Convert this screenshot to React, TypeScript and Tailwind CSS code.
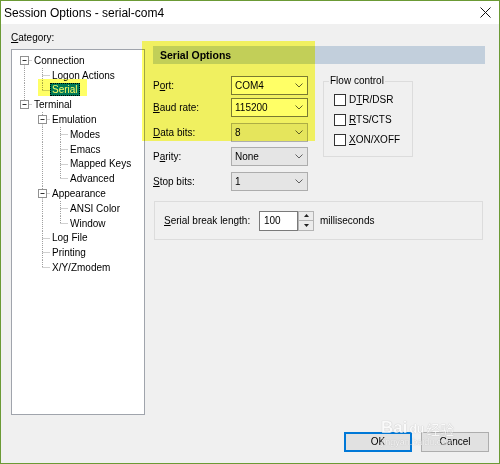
import { type FC, type ReactNode } from "react";

type TreeNode = {
  label: string;
  level: number;
  box?: boolean;
  guides: boolean[];
  above?: boolean;
  next?: boolean;
  selected?: boolean;
};

const NODES: TreeNode[] = [
  { label: "Connection", level: 0, box: true, guides: [], next: true },
  { label: "Logon Actions", level: 1, guides: [true], next: true },
  { label: "Serial", level: 1, guides: [true], selected: true },
  { label: "Terminal", level: 0, box: true, guides: [], above: true },
  { label: "Emulation", level: 1, box: true, guides: [false], above: true, next: true },
  { label: "Modes", level: 2, guides: [false, true], next: true },
  { label: "Emacs", level: 2, guides: [false, true], next: true },
  { label: "Mapped Keys", level: 2, guides: [false, true], next: true },
  { label: "Advanced", level: 2, guides: [false, true] },
  { label: "Appearance", level: 1, box: true, guides: [false], above: true, next: true },
  { label: "ANSI Color", level: 2, guides: [false, true], next: true },
  { label: "Window", level: 2, guides: [false, true] },
  { label: "Log File", level: 1, guides: [false], next: true },
  { label: "Printing", level: 1, guides: [false], next: true },
  { label: "X/Y/Zmodem", level: 1, guides: [false] },
];

const ROW_H = 14.8;
const COL_W = 18;

// dotted connector lines + expander box for one tree row
const Connector: FC<{ node: TreeNode }> = ({ node }) => {
  const w = COL_W * (node.level + 1) - 1;
  const cx = COL_W * node.level + 9.5;
  const cy = 7.5;
  const line = { stroke: "#a0a0a0", strokeWidth: 1, strokeDasharray: "1 1" };
  return (
    <svg width={w} height={ROW_H} className="shrink-0" aria-hidden="true">
      {node.guides.map((on, c) =>
        on ? <line key={c} x1={COL_W * c + 9.5} y1={0} x2={COL_W * c + 9.5} y2={ROW_H} {...line} /> : null
      )}
      {node.box ? (
        <>
          {node.above && <line x1={cx} y1={0} x2={cx} y2={cy - 4} {...line} />}
          {node.next && <line x1={cx} y1={cy + 4} x2={cx} y2={ROW_H} {...line} />}
          <line x1={cx + 4} y1={cy} x2={w} y2={cy} {...line} />
          <rect x={cx - 4} y={cy - 4} width={8} height={8} fill="#fff" stroke="#919191" />
          <line x1={cx - 2} y1={cy} x2={cx + 2} y2={cy} stroke="#333" />
        </>
      ) : (
        <>
          <line x1={cx} y1={0} x2={cx} y2={node.next ? ROW_H : cy} {...line} />
          <line x1={cx} y1={cy} x2={w} y2={cy} {...line} />
        </>
      )}
    </svg>
  );
};

const Chevron: FC = () => (
  <svg width="8" height="5" viewBox="0 0 8 5" aria-hidden="true">
    <polyline points="0.5,0.5 4,4 7.5,0.5" fill="none" stroke="#606060" strokeWidth="1" />
  </svg>
);

const Combo: FC<{ value: string; editable?: boolean }> = ({ value, editable }) => (
  <div
    className={
      editable
        ? "flex h-[19px] w-[77px] items-center justify-between border border-[#7a7a7a] bg-white pl-[3px] pr-[4px]"
        : "flex h-[19px] w-[77px] items-center justify-between border border-[#adadad] bg-[#e5e5e5] pl-[3px] pr-[4px]"
    }
  >
    <span>{value}</span>
    <Chevron />
  </div>
);

const FormRow: FC<{ label: ReactNode; value: string; editable?: boolean; className?: string }> = ({
  label,
  value,
  editable,
  className,
}) => (
  <div className={`flex items-center ${className ?? ""}`}>
    <span className="w-[78px]">{label}</span>
    <Combo value={value} editable={editable} />
  </div>
);

const Check: FC<{ children: ReactNode }> = ({ children }) => (
  <div className="flex h-[20px] items-center gap-[3px]">
    <span className="h-[12px] w-[12px] border border-[#333] bg-white" />
    <span>{children}</span>
  </div>
);

const U: FC<{ children: ReactNode }> = ({ children }) => (
  <span className="underline underline-offset-[1px]">{children}</span>
);

export default function App() {
  return (
    <div className="relative flex h-[464px] w-[500px] flex-col border border-[#6b9a35] bg-[#f0f0f0] font-['Liberation_Sans',Arial,sans-serif] text-[10px] leading-[14px] text-black">
      {/* title bar */}
      <div className="flex h-[23px] shrink-0 items-center justify-between bg-white pl-[3px] pr-[8px]">
        <span className="text-[12px]">Session Options - serial-com4</span>
        <svg width="11" height="11" viewBox="0 0 11 11" aria-hidden="true">
          <path d="M0.5 0.5 L10.5 10.5 M10.5 0.5 L0.5 10.5" stroke="#111" strokeWidth="1" />
        </svg>
      </div>

      {/* body */}
      <div className="flex flex-1 flex-col">
        <div className="flex">
          {/* category tree */}
          <div className="flex flex-col pl-[10px] pt-[7px]">
            <span>
              <U>C</U>ategory:
            </span>
            <div className="mt-[4px] flex h-[366px] w-[134px] flex-col border border-[#a0a4ac] bg-white pl-[3px] pt-[3px]">
              {NODES.map((n) => (
                <div key={n.label} className="flex h-[14.8px] items-center">
                  <Connector node={n} />
                  {n.selected ? (
                    <span className="bg-[#0078d7] px-[2px] leading-[13px] text-white outline-1 outline-offset-[-1px] outline-black outline-dotted">
                      {n.label}
                    </span>
                  ) : (
                    <span className="px-[2px] leading-[13px]">{n.label}</span>
                  )}
                </div>
              ))}
            </div>
          </div>

          {/* serial options panel */}
          <div className="ml-[8px] flex flex-col pt-[22px]">
            <div className="flex h-[18px] w-[332px] items-center bg-[#c2cfdc] pl-[7px] text-[10.5px] font-bold">
              Serial Options
            </div>

            <div className="flex">
              <div className="flex flex-col pt-[12px]">
                <FormRow label={<>P<U>o</U>rt:</>} value="COM4" editable />
                <FormRow label={<><U>B</U>aud rate:</>} value="115200" editable className="mt-[3px]" />
                <FormRow label={<><U>D</U>ata bits:</>} value="8" className="mt-[6px]" />
                <FormRow label={<>P<U>a</U>rity:</>} value="None" className="mt-[5px]" />
                <FormRow label={<><U>S</U>top bits:</>} value="1" className="mt-[6px]" />
              </div>

              <fieldset className="ml-[15px] mt-[10px] h-[83px] w-[90px] border border-[#dcdcdc]">
                <legend className="ml-[5px] px-[1px] leading-[14px]">Flow control</legend>
                <div className="flex flex-col pl-[10px] pt-[2px]">
                  <Check>
                    D<U>T</U>R/DSR
                  </Check>
                  <Check>
                    <U>R</U>TS/CTS
                  </Check>
                  <Check>
                    <U>X</U>ON/XOFF
                  </Check>
                </div>
              </fieldset>
            </div>

            <div className="ml-[1px] mt-[10px] flex h-[39px] w-[329px] items-center border border-[#dcdcdc] pl-[9px]">
              <span className="w-[95px]">
                <U>S</U>erial break length:
              </span>
              <div className="flex h-[20px] w-[39px] items-center border border-[#7a7a7a] bg-white pl-[4px]">100</div>
              <div className="flex h-[20px] w-[16px] flex-col">
                <div className="flex h-[10px] items-center justify-center border border-[#b4b4b4] bg-[#ececec]">
                  <svg width="5" height="3" viewBox="0 0 5 3" aria-hidden="true">
                    <path d="M0 3 L2.5 0 L5 3 Z" fill="#222" />
                  </svg>
                </div>
                <div className="flex h-[10px] items-center justify-center border border-t-0 border-[#b4b4b4] bg-[#ececec]">
                  <svg width="5" height="3" viewBox="0 0 5 3" aria-hidden="true">
                    <path d="M0 0 L2.5 3 L5 0 Z" fill="#222" />
                  </svg>
                </div>
              </div>
              <span className="ml-[6px]">milliseconds</span>
            </div>
          </div>
        </div>

        {/* dialog buttons */}
        <div className="mt-auto flex justify-end gap-[9px] pb-[11px] pr-[10px]">
          <button className="flex h-[20px] w-[68px] items-center justify-center border-2 border-[#0078d7] bg-[#e1e1e1]">
            OK
          </button>
          <button className="flex h-[20px] w-[68px] items-center justify-center border border-[#adadad] bg-[#e1e1e1]">
            Cancel
          </button>
        </div>
      </div>

      {/* highlighter marks */}
      <div className="pointer-events-none absolute left-[141px] top-[40px] h-[100px] w-[173px] bg-[#ffff00] opacity-60 mix-blend-multiply" />
      <div className="pointer-events-none absolute left-[37px] top-[78px] h-[17px] w-[49px] bg-[#ffff00] opacity-60 mix-blend-multiply" />

      {/* watermark */}
      <div className="pointer-events-none absolute left-[380px] top-[418px] flex flex-col items-center text-white opacity-70 [text-shadow:0_0_1px_#8a8a8a]">
        <div className="flex items-end gap-[2px]">
          <span className="text-[17px] font-bold leading-[18px]">Bai</span>
          <span className="text-[12px] font-bold leading-[15px]">du</span>
          <span className="font-['Noto_Sans_CJK_SC',sans-serif] text-[14px] leading-[16px]">经验</span>
        </div>
        <span className="text-[9px] leading-[11px]">jingyan.baidu.com</span>
      </div>
    </div>
  );
}
